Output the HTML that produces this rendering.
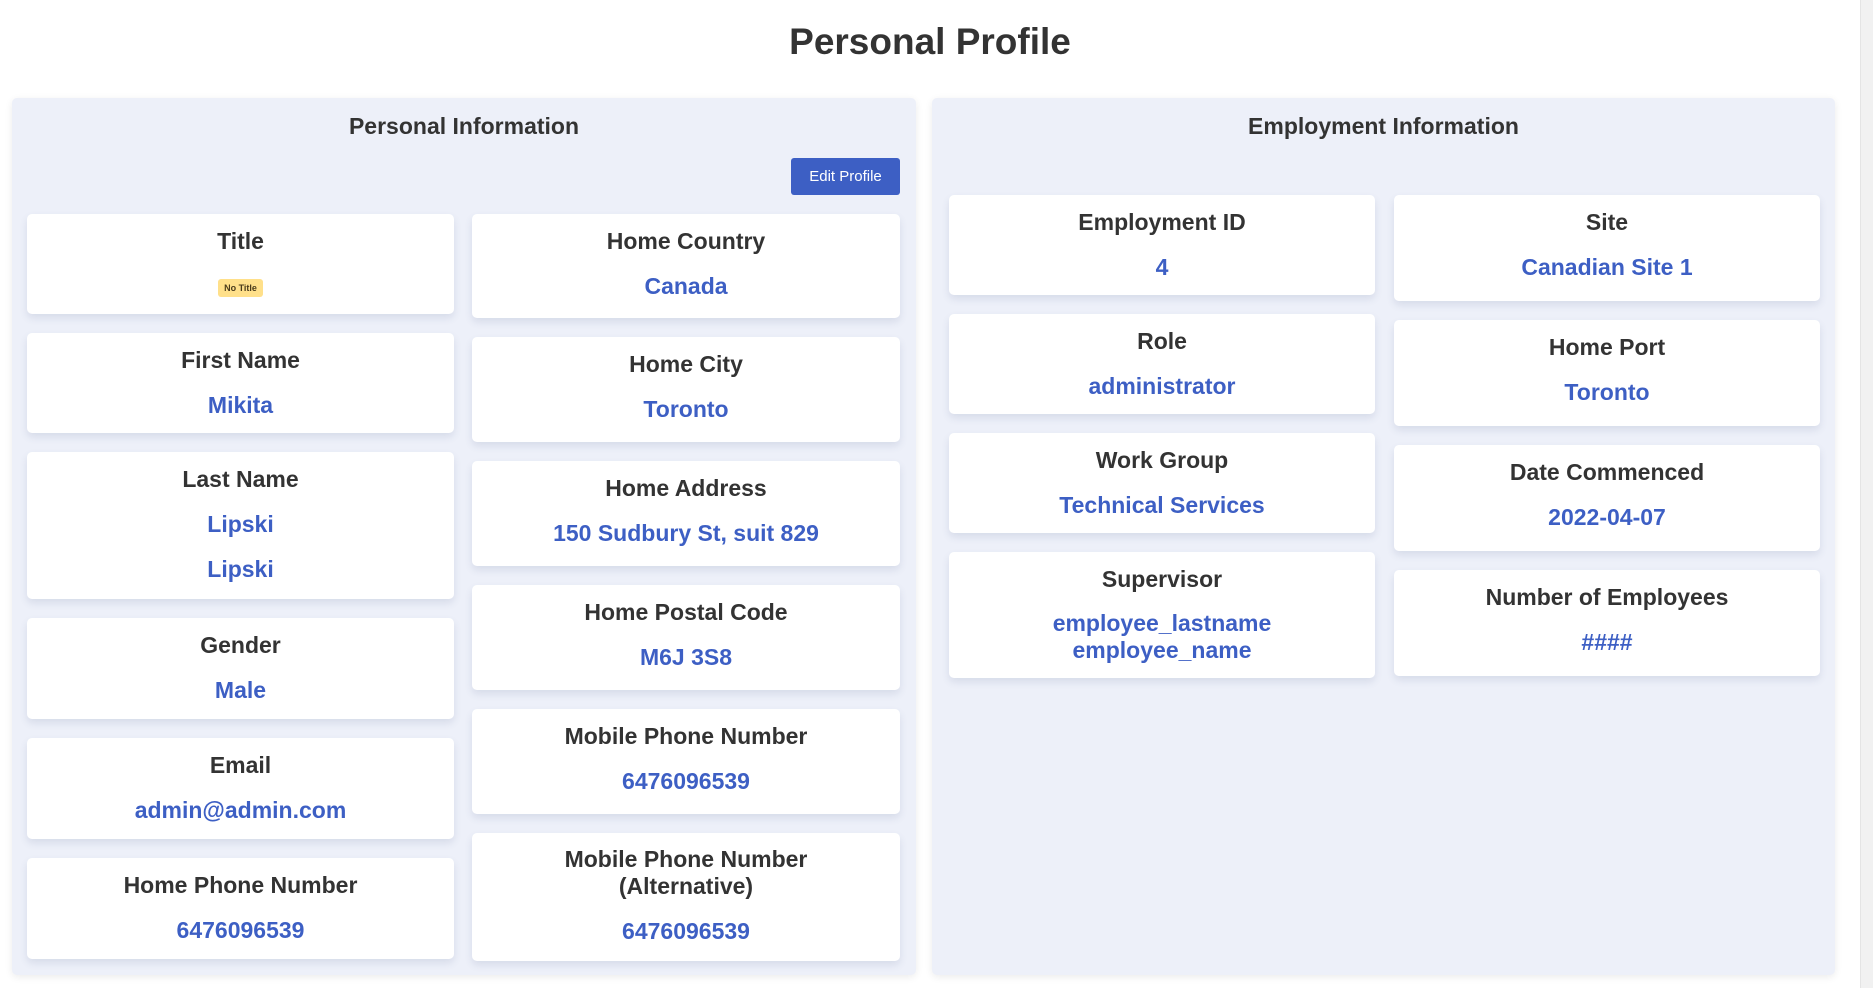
<!DOCTYPE html>
<html><head><meta charset="utf-8"><style>
*{box-sizing:border-box;margin:0;padding:0}
html,body{width:1873px;height:988px;overflow:hidden;background:#fff;font-family:"Liberation Sans",sans-serif;color:#333}
.sb{position:absolute;right:0;top:0;width:13px;height:988px;background:#f1f1f1;border-left:1px solid #e4e4e4}
h1{position:absolute;left:0;width:1860px;top:18px;text-align:center;font-size:37px;line-height:48px;font-weight:bold;color:#333}
.panel{position:absolute;top:98px;height:877px;background:#edf0f9;border-radius:5px;box-shadow:0 2px 8px rgba(0,0,0,.08)}
.ph{position:absolute;left:0;right:0;top:112px;text-align:center;font-size:23px;line-height:28px;font-weight:bold}
.btn{position:absolute;left:791px;top:158px;width:109px;height:37px;background:#3d5fc4;color:#fff;border-radius:3px;font-size:15px;line-height:37px;text-align:center}
.col{position:absolute;display:flex;flex-direction:column;gap:19px}
.card{background:#fff;border-radius:5px;box-shadow:0 4px 8px rgba(60,70,120,.12);text-align:center;padding:13px 10px 14px}
.l{font-size:23px;line-height:28px;font-weight:bold;color:#333}
.v{font-size:23px;line-height:28px;font-weight:bold;color:#3d5fc4;margin-top:17px}
.v2{font-size:23px;line-height:27px;font-weight:bold;color:#3d5fc4;margin-top:17px}
.badge{display:inline-block;margin-top:24px;background:#ffe08a;border-radius:3px;font-size:9px;font-weight:bold;color:#4a3b1b;padding:4px 6px;line-height:10px}
</style></head><body>
<div class="sb"></div>
<h1>Personal Profile</h1>
<div class="panel" style="left:12px;width:904px"></div>
<div class="panel" style="left:932px;width:903px"></div>
<div class="ph" style="left:12px;right:auto;width:904px">Personal Information</div>
<div class="ph" style="left:932px;right:auto;width:903px">Employment Information</div>
<div class="btn">Edit Profile</div>

<div class="col" style="left:27px;top:214px;width:427px">
<div class="card" style="height:100px"><div class="l">Title</div><span class="badge">No Title</span></div>
<div class="card"><div class="l">First Name</div><div class="v">Mikita</div></div>
<div class="card" style="padding-bottom:16px"><div class="l">Last Name</div><div class="v">Lipski</div><div class="v">Lipski</div></div>
<div class="card" style="padding-bottom:15px"><div class="l">Gender</div><div class="v">Male</div></div>
<div class="card" style="padding-bottom:15px"><div class="l">Email</div><div class="v">admin@admin.com</div></div>
<div class="card" style="padding-bottom:15px"><div class="l">Home Phone Number</div><div class="v">6476096539</div></div>
</div>

<div class="col" style="left:472px;top:214px;width:428px;gap:19px">
<div class="card" style="padding-bottom:18px"><div class="l">Home Country</div><div class="v">Canada</div></div>
<div class="card" style="padding-bottom:19px"><div class="l">Home City</div><div class="v">Toronto</div></div>
<div class="card" style="padding-bottom:19px"><div class="l">Home Address</div><div class="v">150 Sudbury St, suit 829</div></div>
<div class="card" style="padding-bottom:19px"><div class="l">Home Postal Code</div><div class="v">M6J 3S8</div></div>
<div class="card" style="padding-bottom:19px"><div class="l">Mobile Phone Number</div><div class="v">6476096539</div></div>
<div class="card" style="padding-bottom:16px"><div class="l" style="line-height:27px">Mobile Phone Number<br>(Alternative)</div><div class="v">6476096539</div></div>
</div>

<div class="col" style="left:949px;top:195px;width:426px;gap:19px">
<div class="card" style="padding-bottom:14px"><div class="l">Employment ID</div><div class="v">4</div></div>
<div class="card" style="padding-bottom:14px"><div class="l">Role</div><div class="v">administrator</div></div>
<div class="card" style="padding-bottom:14px"><div class="l">Work Group</div><div class="v">Technical Services</div></div>
<div class="card" style="padding-bottom:14px"><div class="l">Supervisor</div><div class="v2">employee_lastname<br>employee_name</div></div>
</div>

<div class="col" style="left:1394px;top:195px;width:426px;gap:19px">
<div class="card" style="padding-bottom:20px"><div class="l">Site</div><div class="v">Canadian Site 1</div></div>
<div class="card" style="padding-bottom:20px"><div class="l">Home Port</div><div class="v">Toronto</div></div>
<div class="card" style="padding-bottom:20px"><div class="l">Date Commenced</div><div class="v">2022-04-07</div></div>
<div class="card" style="padding-bottom:20px"><div class="l">Number of Employees</div><div class="v">####</div></div>
</div>
</body></html>
